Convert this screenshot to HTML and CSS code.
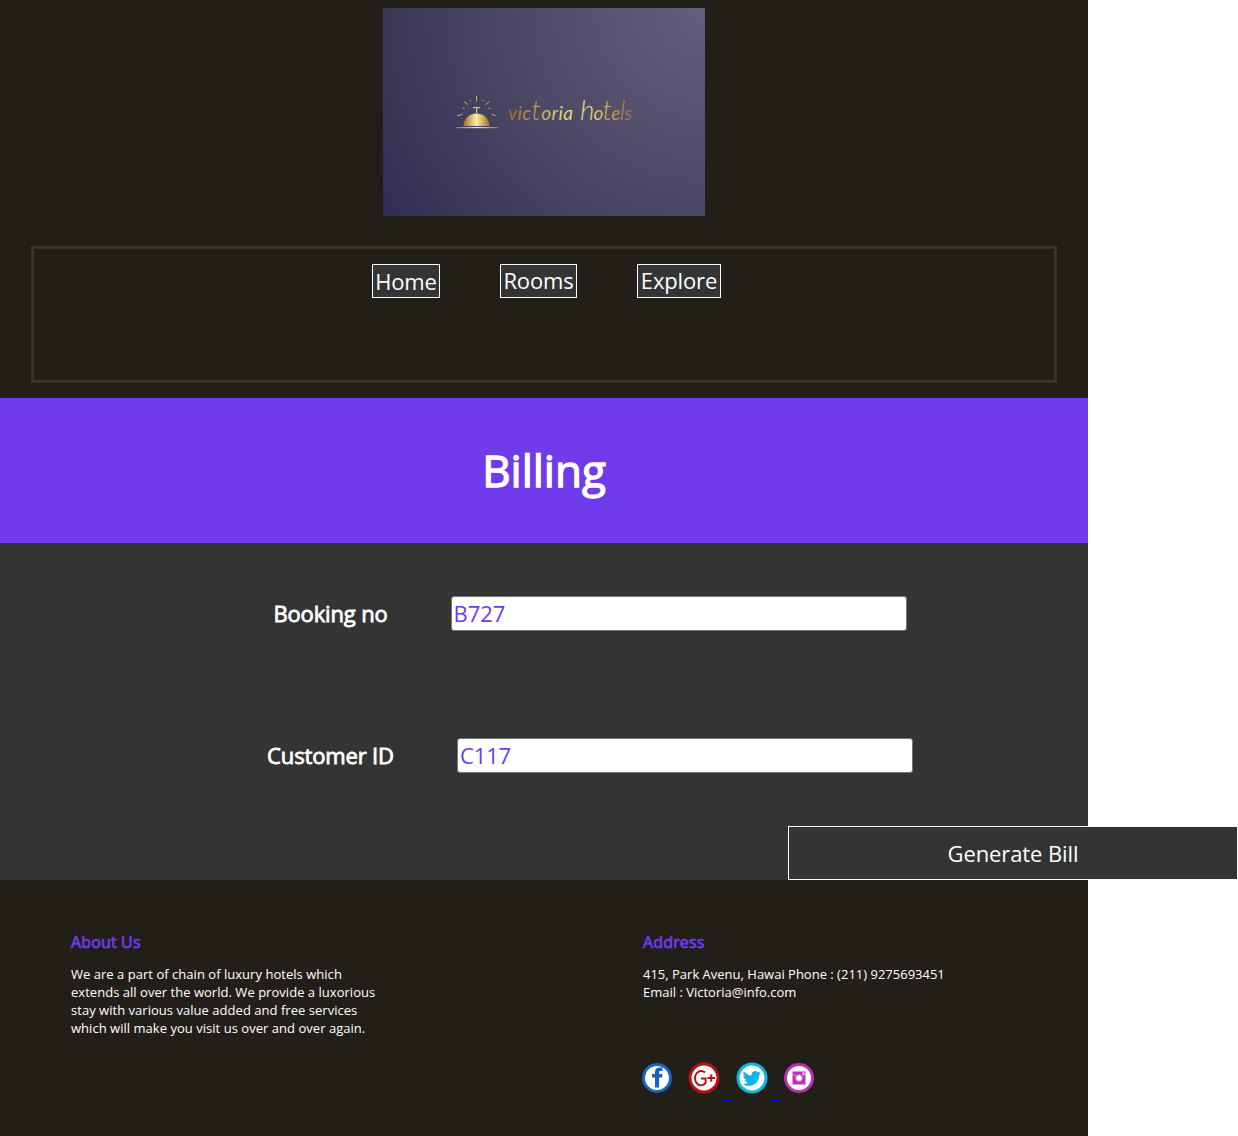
FILE: index.html
```html
<!DOCTYPE html>
<html lang="en">
<head>
<meta charset="utf-8">
<title>Victoria Hotels - Billing</title>
<link rel="stylesheet" href="styles.css">
</head>
<body>
<div class="page">
  <header class="header">
    <svg class="logo" viewBox="0 0 322 208" role="img" aria-label="Victoria Hotels">
      <defs>
        <radialGradient id="night" gradientUnits="userSpaceOnUse" cx="322" cy="0" r="383">
          <stop offset="0" stop-color="#645f7c"/>
          <stop offset=".5" stop-color="#4c4866"/>
          <stop offset="1" stop-color="#322e52"/>
        </radialGradient>
        <linearGradient id="gold"><stop offset="0" stop-color="#a66c25"/><stop offset=".5" stop-color="#fdf39a"/><stop offset="1" stop-color="#a66c25"/></linearGradient>
        <linearGradient id="ink" gradientUnits="userSpaceOnUse" x1="124" y1="0" x2="251" y2="0"><stop offset="0" stop-color="#9a6228"/><stop offset=".45" stop-color="#e8d678"/><stop offset=".65" stop-color="#e8d678"/><stop offset="1" stop-color="#96652f"/></linearGradient>
      </defs>
      <rect width="322" height="208" fill="url(#night)"/>
      <path d="M80.500 118a13 12.500 0 0 1 26 0z" fill="url(#gold)"/>
      <rect x="73" y="119" width="42.500" height="1.200" fill="url(#gold)"/>
      <path d="M90 99.700h7M93.600 100v5" stroke="#dcc07a" stroke-width="1.200" fill="none"/>
      <path d="M93.600 88v5.500M81 93.500l4 3.200M106.500 93.500l-4 3.200M87 92l1 1M100.500 92l-1 1M79.500 100l2 .8M107.500 100.800l-2-.8M74 107.800l5.500-1.600M112.500 107.800l-4-1.800" stroke="#cdb06b" stroke-width="1" fill="none"/>
      <text class="logo-text" x="125" y="112" textLength="65" lengthAdjust="spacing" fill="url(#ink)">vic<tspan class="tall">t</tspan>oria</text>
      <text class="logo-text" x="197" y="112" textLength="52" lengthAdjust="spacing" fill="url(#ink)"><tspan class="tall">h</tspan>o<tspan class="tall">t</tspan>e<tspan class="tall">l</tspan>s</text>
    </svg>
    <nav class="nav">
      <a class="nav-link nav-home">Home</a>
      <a class="nav-link nav-rooms">Rooms</a>
      <a class="nav-link nav-explore">Explore</a>
    </nav>
  </header>
  <section class="banner"><h1 class="title">Billing</h1></section>
  <form class="form">
    <div class="row"><label class="label" for="booking">Booking no</label><input class="input" id="booking" value="B727"></div>
    <div class="row"><label class="label" for="customer">Customer ID</label><input class="input" id="customer" value="C117"></div>
    <button class="submit" type="button">Generate Bill</button>
  </form>
  <footer class="footer">
    <section class="about">
      <h2 class="heading">About Us</h2>
      <p class="text">We are a part of chain of luxury hotels which extends all over the world. We provide a luxorious stay with various value added and free services which will make you visit us over and over again.</p>
    </section>
    <section class="address">
      <h2 class="heading">Address</h2>
      <p class="text">415, Park Avenu, Hawai Phone : (211) 9275693451<br>Email : Victoria@info.com</p>
      <div class="social">
        <svg class="icon" viewBox="0 0 32 32"><circle cx="16" cy="16" r="13.500" fill="#fff" stroke="#1464c0" stroke-width="3"/><path d="M14 25.500V15.500h-3V12h3v-2C14 7 15.500 5.500 18.500 5.500h3V9h-2c-1 0-1.400.4-1.400 1.400V12h3.400l-.4 3.500h-3v10z" fill="#1464c0"/></svg>
        <span class="gap"></span>
        <svg class="icon" viewBox="0 0 32 32"><circle cx="16" cy="16" r="14" fill="#fff" stroke="#b91010" stroke-width="3"/><path d="M17 10.500A6.200 7.200 0 1 0 17.600 21.200V16.500H13M19.500 16h7.500M23.300 12.300v7.500" fill="none" stroke="#b91010" stroke-width="1.900"/></svg>
        <span class="gap underlined"></span>
        <svg class="icon" viewBox="0 0 32 32"><circle cx="16" cy="16" r="14" fill="#fff" stroke="#0eb6e4" stroke-width="3"/><path d="M25 10.700c-.7.300-1.400.5-2.100.6.800-.5 1.300-1.200 1.600-2-.7.400-1.500.7-2.400.9a3.800 3.800 0 0 0-6.500 3.400c-3.100-.1-5.900-1.700-7.700-4a3.800 3.800 0 0 0 1.200 5c-.6 0-1.200-.2-1.700-.5 0 1.900 1.300 3.400 3 3.800-.6.200-1.100.2-1.700.1.500 1.500 1.900 2.600 3.500 2.600A7.600 7.600 0 0 1 6.700 22c7 4.500 16.500.5 16.500-9 .7-.6 1.300-1.300 1.800-2.300z" fill="#0eb6e4"/></svg>
        <span class="gap underlined"></span>
        <svg class="icon" viewBox="0 0 32 32"><circle cx="16" cy="16" r="13.500" fill="#fff" stroke="#bd30b2" stroke-width="3"/><path d="M9.500 9.500h13v13h-13z" fill="#bd30b2"/><path d="M9.500 13h3M19.500 13h3" stroke="#fff" stroke-width=".6"/><circle cx="16" cy="16" r="3.300" fill="#fff" stroke="#d97dd2"/><path d="M19.500 10.500h2v2h-2z" fill="#fff"/></svg>
      </div>
    </section>
  </footer>
</div>
</body>
</html>
```
FILE: styles.css
```css
* { box-sizing: border-box; }
body { margin: 0; background: #fff; color: #fff; font-family: "Open Sans", sans-serif; overflow: hidden; }
.page { width: 1088px; height: 1136px; }
.header { height: 398px; padding-top: 8px; background: #221f19; display: flex; flex-direction: column; align-items: center; }
.logo { display: block; width: 322px; height: 208px; }
.logo-text { font: italic 400 19px Lato, sans-serif; }
.tall { font-size: 28px; font-weight: 300; }
.nav { width: 1026px; height: 137px; margin-top: 30px; padding: 15px 0 0 5px; border: 3px solid #37342f; display: flex; justify-content: center; align-items: flex-start; gap: 60px; }
.nav-link { height: 34px; border: 1px solid #fff; background: #343434; font-size: 22px; line-height: 30px; letter-spacing: -.15px; text-align: center; }
.nav-home { width: 68px; line-height: 32px; }
.nav-rooms { width: 77px; }
.nav-explore { width: 84px; }
.banner { height: 145px; background: #703beb; display: flex; justify-content: center; padding-top: 42px; }
.title { margin: 0; font-size: 44px; line-height: 60px; font-weight: 400; -webkit-text-stroke: 1.3px #fff; }
.form { height: 337px; padding-top: 53px; background: #343434; }
.row { height: 35px; margin: 0 0 107px 92px; display: flex; justify-content: center; align-items: center; gap: 63px; }
.label { font-size: 22px; line-height: 35px; letter-spacing: -.15px; -webkit-text-stroke: .8px #fff; }
.input { width: 456px; height: 35px; padding: 0 2px 1px; border: 1px solid #767676; border-radius: 3px; background: #fff; color: #703beb; font: 22px "Open Sans", sans-serif; letter-spacing: -.1px; }
.row + .row { margin-bottom: 53px; }
.submit { display: block; width: 450px; height: 54px; margin-left: 788px; padding: 0; border: 1px solid #fff; background: #343434; color: #fff; font: 22px "Open Sans", sans-serif; letter-spacing: -.1px; }
.footer { height: 256px; padding: 50px 71px 0; background: #221f19; display: flex; }
.about { width: 572px; }
.about .text { width: 320px; letter-spacing: .03px; }
.heading { margin: 0 0 11px; color: #703beb; font-size: 16px; line-height: 24px; letter-spacing: .15px; font-weight: 400; -webkit-text-stroke: .7px #703beb; }
.text { margin: 0; font-size: 13px; line-height: 18px; }
.address .text { white-space: nowrap; }
.social { display: flex; margin: 61px 0 0 -2px; }
.icon { width: 32px; height: 32px; }
.gap { width: 15.3px; height: 40px; }
.underlined { border-bottom: 2px solid transparent; border-image: linear-gradient(90deg, transparent 4px, #0000ee 4px, #0000ee 10px, transparent 10px) 2; }
```
